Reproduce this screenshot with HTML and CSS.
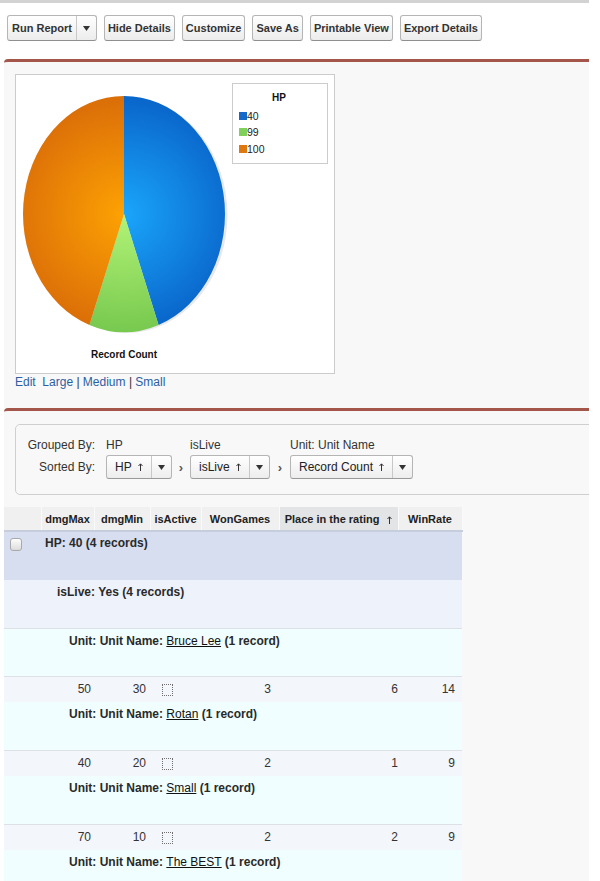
FILE: index.html
```html
<!DOCTYPE html>
<html>
<head>
<meta charset="utf-8">
<title>Report</title>
<link rel="stylesheet" href="styles.css">
</head>
<body>
<div class="topbar"></div>
<div class="toolbar">
  <div class="btn btn-split">
    <span class="btn-main">Run Report</span>
    <span class="btn-drop"><svg width="7" height="5" viewBox="0 0 7 5"><polygon points="0,0 7,0 3.5,5" fill="#333"/></svg></span>
  </div>
  <button class="btn">Hide Details</button>
  <button class="btn">Customize</button>
  <button class="btn">Save As</button>
  <button class="btn">Printable View</button>
  <button class="btn">Export Details</button>
</div>

<section class="panel chart-panel">
  <div class="chart-box">
    <svg class="chart" width="318" height="298" viewBox="0 0 318 298">
      <defs>
        <radialGradient id="gBlue" cx="108" cy="139" r="112" gradientUnits="userSpaceOnUse">
          <stop offset="0" stop-color="#1aa6fa"/>
          <stop offset="1" stop-color="#0a68cc"/>
        </radialGradient>
        <radialGradient id="gGreen" cx="108" cy="139" r="118" gradientUnits="userSpaceOnUse">
          <stop offset="0" stop-color="#b2f477"/>
          <stop offset="1" stop-color="#78c94f"/>
        </radialGradient>
        <radialGradient id="gOrange" cx="108" cy="139" r="112" gradientUnits="userSpaceOnUse">
          <stop offset="0" stop-color="#fda203"/>
          <stop offset="1" stop-color="#dc7008"/>
        </radialGradient>
      </defs>
      <ellipse cx="110.5" cy="140" rx="101" ry="118" fill="#d9d9d9" opacity="0.6"/>
      <path d="M108,139 L108,21 A101,118 0 0 1 142.54,249.88 Z" fill="url(#gBlue)"/>
      <path d="M108,139 L142.54,249.88 A101,118 0 0 1 73.46,249.88 Z" fill="url(#gGreen)"/>
      <path d="M108,139 L73.46,249.88 A101,118 0 0 1 108,21 Z" fill="url(#gOrange)"/>
      <rect x="216.5" y="8.5" width="95" height="80" fill="#fff" stroke="#cccccc"/>
      <text x="263" y="26" class="lg-title" text-anchor="middle">HP</text>
      <rect x="223" y="37" width="8" height="8" fill="#1769c9"/>
      <text x="231" y="45" class="lg-item">40</text>
      <rect x="223" y="53" width="8" height="8" fill="#7fd15c"/>
      <text x="231" y="61" class="lg-item">99</text>
      <rect x="223" y="70" width="8" height="8" fill="#e07810"/>
      <text x="231" y="78" class="lg-item">100</text>
      <text x="108" y="283" class="ch-title" text-anchor="middle">Record Count</text>
    </svg>
  </div>
  <div class="chart-links"><a href="#">Edit</a>&nbsp; <a href="#">Large</a> | <a href="#">Medium</a> | <a href="#">Small</a></div>
</section>

<section class="panel report-panel">
  <div class="grouping">
    <div class="g-label">Grouped By:</div>
    <div class="g-name">HP</div>
    <div class="g-name">isLive</div>
    <div class="g-name">Unit: Unit Name</div>

    <div class="g-label">Sorted By:</div>
    <div class="g-cell">
      <span class="sort-btn"><span class="sort-main">HP<svg class="up" width="5" height="8" viewBox="0 0 5 8"><path d="M2.5 8V1M0.5 3L2.5 0.8L4.5 3" fill="none" stroke="#333" stroke-width="1"/></svg></span><span class="sort-drop"><svg width="7" height="5" viewBox="0 0 7 5"><polygon points="0,0 7,0 3.5,5" fill="#333"/></svg></span></span>
      <span class="chev">›</span>
    </div>
    <div class="g-cell">
      <span class="sort-btn"><span class="sort-main">isLive<svg class="up" width="5" height="8" viewBox="0 0 5 8"><path d="M2.5 8V1M0.5 3L2.5 0.8L4.5 3" fill="none" stroke="#333" stroke-width="1"/></svg></span><span class="sort-drop"><svg width="7" height="5" viewBox="0 0 7 5"><polygon points="0,0 7,0 3.5,5" fill="#333"/></svg></span></span>
      <span class="chev">›</span>
    </div>
    <div class="g-cell">
      <span class="sort-btn"><span class="sort-main">Record Count<svg class="up" width="5" height="8" viewBox="0 0 5 8"><path d="M2.5 8V1M0.5 3L2.5 0.8L4.5 3" fill="none" stroke="#333" stroke-width="1"/></svg></span><span class="sort-drop"><svg width="7" height="5" viewBox="0 0 7 5"><polygon points="0,0 7,0 3.5,5" fill="#333"/></svg></span></span>
    </div>
  </div>

  <table class="report">
    <colgroup>
      <col class="c0"><col class="c1"><col class="c2"><col class="c3"><col class="c4"><col class="c5"><col class="c6">
    </colgroup>
    <thead>
      <tr>
        <th></th>
        <th>dmgMax</th>
        <th>dmgMin</th>
        <th>isActive</th>
        <th>WonGames</th>
        <th class="sorted">Place in the rating<svg class="up up-h" width="5" height="8" viewBox="0 0 5 8"><path d="M2.5 8V1M0.5 3L2.5 0.8L4.5 3" fill="none" stroke="#333" stroke-width="1"/></svg></th>
        <th>WinRate</th>
      </tr>
    </thead>
    <tbody>
      <tr class="g1">
        <td class="g1-check"><span class="cb"></span></td>
        <td colspan="6">HP: 40 (4 records)</td>
      </tr>
      <tr class="g2">
        <td colspan="7">isLive: Yes (4 records)</td>
      </tr>
      <tr class="g3">
        <td colspan="7">Unit: Unit Name: <a href="#">Bruce Lee</a> (1 record)</td>
      </tr>
      <tr class="data">
        <td></td><td class="n1">50</td><td class="n2">30</td><td class="n3"><span class="cb-dot"></span></td><td class="n4">3</td><td class="n5">6</td><td class="n6">14</td>
      </tr>
      <tr class="g3">
        <td colspan="7">Unit: Unit Name: <a href="#">Rotan</a> (1 record)</td>
      </tr>
      <tr class="data">
        <td></td><td class="n1">40</td><td class="n2">20</td><td class="n3"><span class="cb-dot"></span></td><td class="n4">2</td><td class="n5">1</td><td class="n6">9</td>
      </tr>
      <tr class="g3">
        <td colspan="7">Unit: Unit Name: <a href="#">Small</a> (1 record)</td>
      </tr>
      <tr class="data">
        <td></td><td class="n1">70</td><td class="n2">10</td><td class="n3"><span class="cb-dot"></span></td><td class="n4">2</td><td class="n5">2</td><td class="n6">9</td>
      </tr>
      <tr class="g3">
        <td colspan="7">Unit: Unit Name: <a href="#">The BEST</a> (1 record)</td>
      </tr>
    </tbody>
  </table>
</section>
</body>
</html>
```

FILE: styles.css
```css
* { box-sizing: border-box; }

html, body {
  margin: 0;
  background: #ffffff;
}

body {
  width: 589px;
  font-family: "Liberation Sans", Arial, sans-serif;
  font-size: 12px;
  color: #222;
}

.topbar {
  height: 3px;
  background: #d2d2d2;
}

.toolbar {
  display: flex;
  gap: 7px;
  height: 56px;
  padding: 12px 0 0 7px;
  align-items: flex-start;
}

.btn {
  height: 26px;
  padding: 0 3px;
  border: 1px solid #b5b5b5;
  border-bottom-color: #8f8f8f;
  border-radius: 3px;
  background: linear-gradient(#ffffff, #ececec);
  font-family: "Liberation Sans", Arial, sans-serif;
  font-size: 11px;
  font-weight: bold;
  color: #333;
  line-height: 24px;
}

.btn-split {
  display: flex;
  padding: 0;
}

.btn-main {
  padding: 0 4px 0 4px;
}

.btn-drop {
  width: 20px;
  border-left: 1px solid #c8c8c8;
  display: flex;
  align-items: center;
  justify-content: center;
}

.panel {
  margin-left: 4px;
  background: #f8f8f8;
  border-top: 3px solid #a35649;
  border-top-left-radius: 4px;
}

.chart-panel {
  padding: 12px 0 19px 11px;
}

.chart-box {
  width: 320px;
  height: 300px;
  background: #fff;
  border: 1px solid #cccccc;
}

.chart {
  display: block;
}

.lg-title {
  font-family: "Liberation Sans", Arial, sans-serif;
  font-size: 10px;
  font-weight: bold;
  fill: #111;
}

.lg-item {
  font-family: "Liberation Sans", Arial, sans-serif;
  font-size: 10.5px;
  fill: #222;
}

.ch-title {
  font-family: "Liberation Sans", Arial, sans-serif;
  font-size: 10px;
  font-weight: bold;
  fill: #111;
}

.chart-links {
  margin-top: 1px;
  line-height: 14px;
  color: #333;
}

.chart-links a {
  color: #2a5fa5;
  text-decoration: none;
}

.report-panel {
  padding-top: 13px;
  overflow: hidden;
  min-height: 480px;
}

.grouping {
  margin-left: 11px;
  margin-right: -12px;
  height: 71px;
  padding: 13px 0 0 0;
  border: 1px solid #cfcfcf;
  border-radius: 5px;
  background: #f8f8f8;
  display: grid;
  grid-template-columns: 90px 84px 100px auto;
  grid-template-rows: 14px 24px;
  row-gap: 3px;
  font-size: 12px;
  color: #333;
}

.g-label {
  text-align: right;
  padding-right: 11px;
  line-height: 14px;
  align-self: center;
}

.g-name {
  line-height: 14px;
}

.g-cell {
  display: flex;
  align-items: center;
  white-space: nowrap;
}

.sort-btn {
  display: inline-flex;
  flex: none;
  height: 24px;
  border: 1px solid #b5b5b5;
  border-bottom-color: #999;
  border-radius: 3px;
  background: linear-gradient(#ffffff, #ededed);
  color: #222;
  line-height: 22px;
  white-space: nowrap;
}

.sort-main {
  display: flex;
  align-items: center;
  padding: 0 8px 0 8px;
}

.up {
  display: inline-block;
  margin-left: 6px;
  flex: none;
}

.sort-drop {
  width: 20px;
  border-left: 1px solid #c8c8c8;
  display: flex;
  align-items: center;
  justify-content: center;
}

.chev {
  flex: 1;
  text-align: center;
  color: #555;
  font-size: 13px;
  font-weight: bold;
}

.report {
  margin-top: 12px;
  width: 458px;
  border-collapse: collapse;
  table-layout: fixed;
}

.c0 { width: 37px; }
.c1 { width: 53px; }
.c2 { width: 56px; }
.c3 { width: 51px; }
.c4 { width: 78px; }
.c5 { width: 119px; }
.c6 { width: 64px; }

.report th {
  height: 24px;
  padding: 0;
  background: #f0f0f0;
  border-right: 1px solid #fafafa;
  border-bottom: 2px solid #c6cede;
  font-size: 11px;
  font-weight: bold;
  color: #222;
  text-align: center;
  white-space: nowrap;
}

.report th.sorted {
  background: #e2e4e6;
}

.up-h {
  margin-left: 8px;
  vertical-align: -1px;
}

.report td {
  padding: 0;
  vertical-align: top;
  white-space: nowrap;
}

.report a {
  color: #111;
  font-weight: normal;
  text-decoration: underline;
}

.g1 td {
  height: 49px;
  background: #d6def0;
  padding: 4px 0 0 4px;
  line-height: 14px;
  font-weight: bold;
  color: #2a2a2a;
}

.g1 td.g1-check {
  padding: 6px 0 0 6px;
}

.cb {
  display: block;
  width: 12px;
  height: 13px;
  border: 1px solid #a9a9a9;
  border-radius: 3px;
  background: linear-gradient(#fdfdfd, #dcdcdc);
}

.g2 td {
  height: 48px;
  background: #eef2fa;
  padding: 5px 0 0 53px;
  line-height: 14px;
  border-bottom: 1px solid #dde1e6;
  font-weight: bold;
  color: #2a2a2a;
}

.g3 td {
  height: 48px;
  background: #f0feff;
  padding: 5px 0 0 65px;
  line-height: 14px;
  border-bottom: 1px solid #dde1e6;
  font-weight: bold;
  color: #2a2a2a;
}

.data td {
  height: 26px;
  background: #f3f6fa;
  padding-top: 5px;
  line-height: 14px;
  color: #333;
  text-align: right;
}

.data td.n1 { padding-right: 3px; }
.data td.n2 { padding-right: 4px; }
.data td.n3 { text-align: left; padding: 7px 0 0 12px; }
.data td.n4 { padding-right: 8px; }
.data td.n5 { padding-right: 0; }
.data td.n6 { padding-right: 7px; }

.cb-dot {
  display: block;
  width: 11px;
  height: 12px;
  border: 1px dotted #6f6f6f;
}
```
